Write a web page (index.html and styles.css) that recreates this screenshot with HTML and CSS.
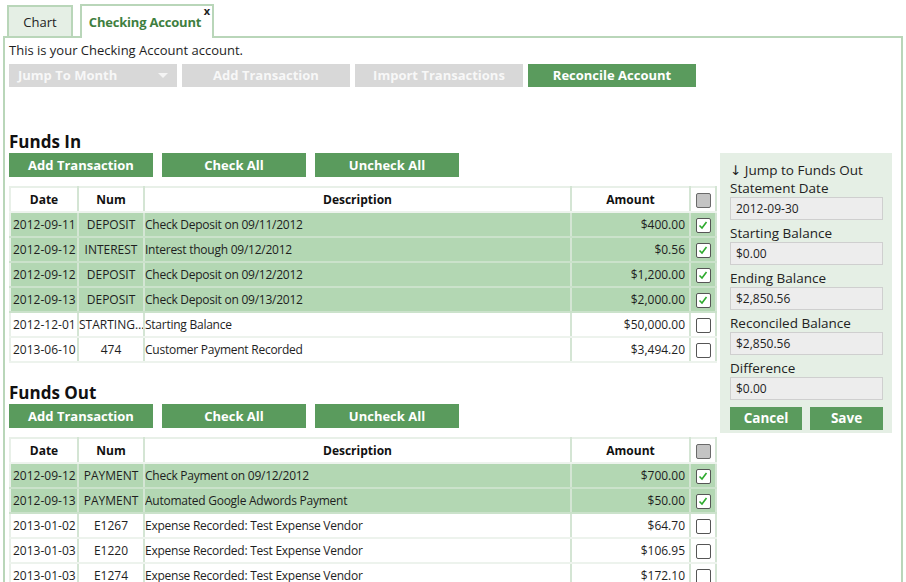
FILE: index.html
```html
<!DOCTYPE html>
<html>
<head>
<meta charset="utf-8">
<link rel="stylesheet" href="styles.css">
</head>
<body>
<div class="tabs">
  <div class="tab">Chart</div>
  <div class="tab active">Checking Account<span class="close">x</span></div>
</div>
<div class="panel">
  <p class="intro">This is your Checking Account account.</p>
  <div class="toolbar">
    <div class="btn wide disabled select">Jump To Month<span class="caret"></span></div>
    <div class="btn wide disabled">Add Transaction</div>
    <div class="btn wide disabled">Import Transactions</div>
    <div class="btn wide">Reconcile Account</div>
  </div>
  <div class="layout">
    <div class="main">
      <h2>Funds In</h2>
      <div class="actions">
        <div class="btn">Add Transaction</div>
        <div class="btn">Check All</div>
        <div class="btn">Uncheck All</div>
      </div>
      <table class="grid">
        <colgroup><col class="c-date"><col class="c-num"><col class="c-desc"><col class="c-amt"><col class="c-chk"></colgroup>
        <tr class="head"><th>Date</th><th>Num</th><th>Description</th><th>Amount</th><th><span class="cb all"></span></th></tr>
        <tr class="on"><td>2012-09-11</td><td class="num">DEPOSIT</td><td class="desc">Check Deposit on 09/11/2012</td><td class="amt">$400.00</td><td><span class="cb"><svg viewBox="0 0 12 12"><path d="M2.5 6.5 L5 9 L9.5 3"/></svg></span></td></tr>
        <tr class="on"><td>2012-09-12</td><td class="num">INTEREST</td><td class="desc">Interest though 09/12/2012</td><td class="amt">$0.56</td><td><span class="cb"><svg viewBox="0 0 12 12"><path d="M2.5 6.5 L5 9 L9.5 3"/></svg></span></td></tr>
        <tr class="on"><td>2012-09-12</td><td class="num">DEPOSIT</td><td class="desc">Check Deposit on 09/12/2012</td><td class="amt">$1,200.00</td><td><span class="cb"><svg viewBox="0 0 12 12"><path d="M2.5 6.5 L5 9 L9.5 3"/></svg></span></td></tr>
        <tr class="on"><td>2012-09-13</td><td class="num">DEPOSIT</td><td class="desc">Check Deposit on 09/13/2012</td><td class="amt">$2,000.00</td><td><span class="cb"><svg viewBox="0 0 12 12"><path d="M2.5 6.5 L5 9 L9.5 3"/></svg></span></td></tr>
        <tr><td>2012-12-01</td><td class="num clip">STARTING…</td><td class="desc">Starting Balance</td><td class="amt">$50,000.00</td><td><span class="cb"></span></td></tr>
        <tr><td>2013-06-10</td><td class="num">474</td><td class="desc">Customer Payment Recorded</td><td class="amt">$3,494.20</td><td><span class="cb"></span></td></tr>
      </table>
      <h2 class="out">Funds Out</h2>
      <div class="actions">
        <div class="btn">Add Transaction</div>
        <div class="btn">Check All</div>
        <div class="btn">Uncheck All</div>
      </div>
      <table class="grid">
        <colgroup><col class="c-date"><col class="c-num"><col class="c-desc"><col class="c-amt"><col class="c-chk"></colgroup>
        <tr class="head"><th>Date</th><th>Num</th><th>Description</th><th>Amount</th><th><span class="cb all"></span></th></tr>
        <tr class="on"><td>2012-09-12</td><td class="num">PAYMENT</td><td class="desc">Check Payment on 09/12/2012</td><td class="amt">$700.00</td><td><span class="cb"><svg viewBox="0 0 12 12"><path d="M2.5 6.5 L5 9 L9.5 3"/></svg></span></td></tr>
        <tr class="on"><td>2012-09-13</td><td class="num">PAYMENT</td><td class="desc">Automated Google Adwords Payment</td><td class="amt">$50.00</td><td><span class="cb"><svg viewBox="0 0 12 12"><path d="M2.5 6.5 L5 9 L9.5 3"/></svg></span></td></tr>
        <tr><td>2013-01-02</td><td class="num">E1267</td><td class="desc">Expense Recorded: Test Expense Vendor</td><td class="amt">$64.70</td><td><span class="cb"></span></td></tr>
        <tr><td>2013-01-03</td><td class="num">E1220</td><td class="desc">Expense Recorded: Test Expense Vendor</td><td class="amt">$106.95</td><td><span class="cb"></span></td></tr>
        <tr><td>2013-01-03</td><td class="num">E1274</td><td class="desc">Expense Recorded: Test Expense Vendor</td><td class="amt">$172.10</td><td><span class="cb"></span></td></tr>
      </table>
    </div>
    <aside class="side">
      <div class="jump">↓ Jump to Funds Out</div>
      <div class="field"><div class="label">Statement Date</div><div class="input">2012-09-30</div></div>
      <div class="field"><div class="label">Starting Balance</div><div class="input">$0.00</div></div>
      <div class="field"><div class="label">Ending Balance</div><div class="input">$2,850.56</div></div>
      <div class="field"><div class="label">Reconciled Balance</div><div class="input">$2,850.56</div></div>
      <div class="field"><div class="label">Difference</div><div class="input">$0.00</div></div>
      <div class="side-actions">
        <div class="btn">Cancel</div>
        <div class="btn">Save</div>
      </div>
    </aside>
  </div>
</div>
</body>
</html>
```
FILE: styles.css
```css
* { box-sizing: border-box; }
html, body { margin: 0; padding: 0; background: #fff; }
body {
  font-family: "Open Sans", "DejaVu Sans", sans-serif;
  font-size: 13px;
  color: #1e1e1e;
  overflow: hidden;
}
.tabs {
  display: flex;
  align-items: flex-end;
  gap: 7px;
  padding: 4px 0 0 7px;
  height: 36px;
}
.tab {
  position: relative;
  height: 31px;
  line-height: 30px;
  background: #e5efe5;
  border: 2px solid #b9d6b9;
  border-bottom: none;
  width: 66px;
  text-align: center;
  font-size: 13px;
  color: #222;
}
.tab.active {
  width: 134px;
  height: 34px;
  line-height: 32px;
  background: #fff;
  color: #3f7f3f;
  font-weight: bold;
  letter-spacing: -0.2px;
  margin-bottom: -2px;
  padding: 0 4px 0 0;
  z-index: 1;
}
.close {
  position: absolute;
  top: -11px;
  right: 2px;
  font-size: 11px;
  font-weight: bold;
  color: #222;
  letter-spacing: 0;
}
.panel {
  margin: 0 3px;
  border: 2px solid #b9d6b9;
  padding: 3px 9px 0 4px;
  height: 600px;
}
.intro {
  margin: 0;
  line-height: 18px;
  height: 18px;
}
.toolbar {
  display: flex;
  gap: 5px;
  margin-top: 5px;
}
.btn {
  height: 23px;
  line-height: 23px;
  background: #5a9b5d;
  color: #fff;
  font-weight: bold;
  font-size: 13px;
  text-align: center;
  width: 144px;
  position: relative;
}
.btn.wide { width: 168px; }
.btn.disabled {
  background: #d8d8d8;
  color: #f7f7f7;
}
.btn.select { text-align: left; padding-left: 9px; }
.caret {
  position: absolute;
  right: 9px;
  top: 9px;
  border-left: 5px solid transparent;
  border-right: 5px solid transparent;
  border-top: 5px solid #f4f4f4;
}
.layout {
  display: flex;
  align-items: flex-start;
  gap: 4px;
  margin-top: 44px;
}
.main { width: 707px; }
h2 {
  margin: 0;
  font-size: 17px;
  line-height: 22px;
  font-weight: bold;
  color: #111;
}
h2.out { margin-top: 19px; }
.actions {
  display: flex;
  gap: 9px;
  margin-bottom: 9px;
}
.actions .btn { height: 24px; line-height: 24px; }
.grid {
  width: 706px;
  border-collapse: collapse;
  border: 2px solid #e8f0e8;
  font-size: 12px;
  table-layout: fixed;
}
.c-date { width: 68px; }
.c-num { width: 66px; }
.c-desc { width: 427px; }
.c-amt { width: 119px; }
.c-chk { width: 26px; }
.grid th, .grid td {
  height: 25px;
  padding: 0 2px;
  border-right: 2px solid #d4e5d4;
  border-bottom: 2px solid #edf3ed;
  text-align: center;
  white-space: nowrap;
  overflow: hidden;
}
.grid th { font-weight: bold; color: #111; }
.grid tr.on td { background: #b3d7b3; border-bottom-color: #cbe2cb; }
.grid td.desc { text-align: left; padding-left: 0; letter-spacing: -0.25px; }
.grid td.amt { text-align: right; padding-right: 4px; }
.grid td.num { padding: 0; }
.cb {
  display: inline-block;
  vertical-align: middle;
  width: 15px;
  height: 15px;
  border: 1.5px solid #555;
  border-radius: 2px;
  background: #fff;
  position: relative;
}
.cb.all { background: #c4c4c4; border-color: #6a6a6a; }
.cb svg {
  position: absolute;
  left: 0;
  top: 0;
  width: 12px;
  height: 12px;
  fill: none;
  stroke: #2daa2d;
  stroke-width: 1.6;
}
.side {
  width: 172px;
  margin-top: 22px;
  background: #e5efe5;
  padding: 8px 9px 3px 10px;
}
.jump { line-height: 18px; font-size: 13.5px; }
.label { line-height: 18px; font-size: 13.5px; color: #222; }
.field { margin-bottom: 4px; }
.input {
  height: 23px;
  line-height: 21px;
  background: #ededed;
  border: 1px solid #cfcfcf;
  padding-left: 5px;
  font-size: 12px;
}
.side-actions {
  display: flex;
  gap: 8px;
  margin-top: 7px;
}
.side-actions .btn { width: 72px; font-size: 13.5px; }
.side-actions .btn + .btn { width: 73px; }
```
